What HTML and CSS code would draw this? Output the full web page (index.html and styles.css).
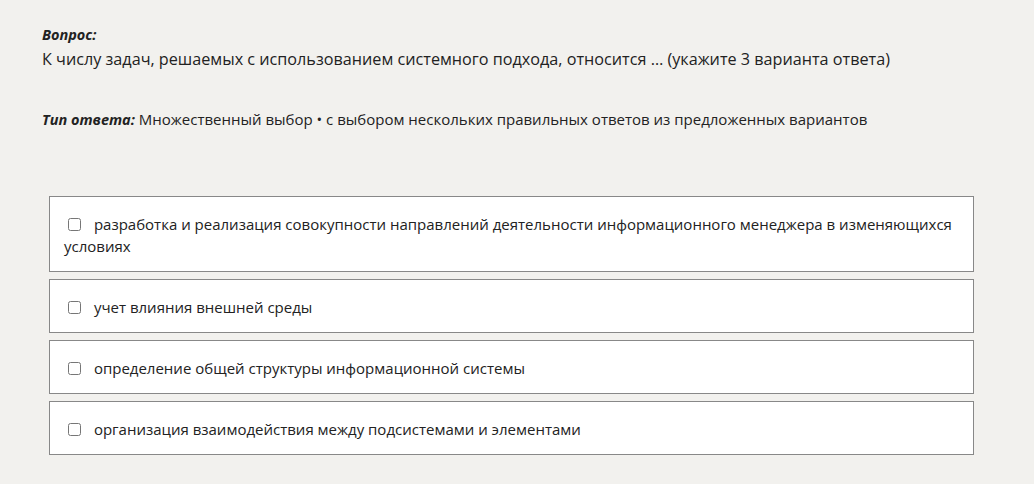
FILE: index.html
```html
<!DOCTYPE html>
<html lang="ru">
<head>
<meta charset="utf-8">
<link rel="stylesheet" href="styles.css">
</head>
<body>
<div class="page">
  <div class="question">
    <div class="label">Вопрос:</div>
    <div class="qtext">К числу задач, решаемых с использованием системного подхода, относится … (укажите 3 варианта ответа)</div>
  </div>
  <div class="type"><span class="label">Тип ответа:</span> Множественный выбор • с выбором нескольких правильных ответов из предложенных вариантов</div>
  <div class="options">
    <label class="option"><input type="checkbox"> разработка и реализация совокупности направлений деятельности информационного менеджера в изменяющихся условиях</label>
    <label class="option"><input type="checkbox"> учет влияния внешней среды</label>
    <label class="option"><input type="checkbox"> определение общей структуры информационной системы</label>
    <label class="option"><input type="checkbox"> организация взаимодействия между подсистемами и элементами</label>
  </div>
</div>
</body>
</html>
```
FILE: styles.css
```css
html, body {
  margin: 0;
  padding: 0;
  background: #f2f1ee;
}
body {
  font-family: "Open Sans", "Noto Sans", sans-serif;
  font-size: 15px;
  color: #222;
}
.page {
  padding: 23px 0 0 42px;
  width: 932px;
}
.label {
  font-weight: 700;
  font-style: italic;
  font-size: 14.5px;
}
.question {
  line-height: 24px;
}
.qtext {
  font-size: 16.2px;
}
.type {
  margin-top: 37px;
  line-height: 22px;
}
.options {
  margin-top: 65px;
  margin-left: 7px;
  display: flex;
  flex-direction: column;
  gap: 7px;
}
.option {
  display: block;
  background: #fff;
  border: 1px solid #888;
  padding: 16px 14px 14px;
  line-height: 22px;
}
.option input {
  margin: 0 9px 0 4px;
  width: 13px;
  height: 13px;
  vertical-align: -1px;
}
```
